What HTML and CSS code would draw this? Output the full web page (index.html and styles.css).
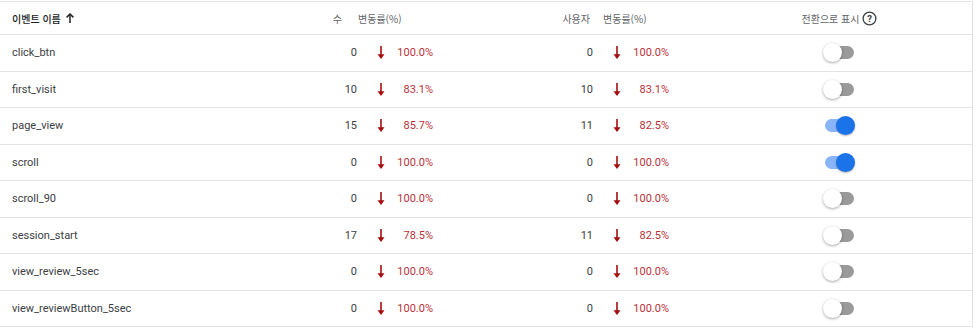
FILE: index.html
```html
<!DOCTYPE html>
<html lang="ko">
<head>
<meta charset="utf-8">
<link rel="stylesheet" href="styles.css">
</head>
<body>
<div class="table">
  <div class="row head">
    <div class="c-name h-name">이벤트 이름
      <svg class="up" width="8" height="10" viewBox="0 0 8 10"><path d="M4 10V2" stroke="#202124" stroke-width="1.5"/><path d="M0.6 4.4L4 1 7.4 4.4" fill="none" stroke="#202124" stroke-width="1.5"/></svg>
    </div>
    <div class="c-num h-count">수</div>
    <div class="h-chg1">변동률(%)</div>
    <div class="c-users h-users">사용자</div>
    <div class="h-chg2">변동률(%)</div>
    <div class="c-spacer"></div>
    <div class="c-tog h-tog">전환으로 표시
      <svg class="help" width="15" height="15" viewBox="0 0 15 15"><circle cx="7.5" cy="7.5" r="6.4" fill="none" stroke="#3c4043" stroke-width="1.3"/><text x="7.5" y="10.8" text-anchor="middle" font-family="Roboto, sans-serif" font-size="9.5" font-weight="700" fill="#3c4043">?</text></svg>
    </div>
  </div>

  <div class="row"><div class="c-name">click_btn</div><div class="c-num">0</div><div class="c-arr"><svg class="down" width="8" height="13" viewBox="0 0 8 13"><path d="M4 0V10" stroke="#a50e0e" stroke-width="1.6"/><path d="M0.5 8.2L4 13 7.5 8.2z" fill="#a50e0e"/></svg></div><div class="c-pct">100.0%</div><div class="c-users">0</div><div class="c-arr"><svg class="down" width="8" height="13" viewBox="0 0 8 13"><path d="M4 0V10" stroke="#a50e0e" stroke-width="1.6"/><path d="M0.5 8.2L4 13 7.5 8.2z" fill="#a50e0e"/></svg></div><div class="c-pct">100.0%</div><div class="c-spacer"></div><div class="c-tog"><span class="toggle"><span class="track"></span><span class="knob"></span></span></div></div>

  <div class="row"><div class="c-name">first_visit</div><div class="c-num">10</div><div class="c-arr"><svg class="down" width="8" height="13" viewBox="0 0 8 13"><path d="M4 0V10" stroke="#a50e0e" stroke-width="1.6"/><path d="M0.5 8.2L4 13 7.5 8.2z" fill="#a50e0e"/></svg></div><div class="c-pct">83.1%</div><div class="c-users">10</div><div class="c-arr"><svg class="down" width="8" height="13" viewBox="0 0 8 13"><path d="M4 0V10" stroke="#a50e0e" stroke-width="1.6"/><path d="M0.5 8.2L4 13 7.5 8.2z" fill="#a50e0e"/></svg></div><div class="c-pct">83.1%</div><div class="c-spacer"></div><div class="c-tog"><span class="toggle"><span class="track"></span><span class="knob"></span></span></div></div>

  <div class="row"><div class="c-name">page_view</div><div class="c-num">15</div><div class="c-arr"><svg class="down" width="8" height="13" viewBox="0 0 8 13"><path d="M4 0V10" stroke="#a50e0e" stroke-width="1.6"/><path d="M0.5 8.2L4 13 7.5 8.2z" fill="#a50e0e"/></svg></div><div class="c-pct">85.7%</div><div class="c-users">11</div><div class="c-arr"><svg class="down" width="8" height="13" viewBox="0 0 8 13"><path d="M4 0V10" stroke="#a50e0e" stroke-width="1.6"/><path d="M0.5 8.2L4 13 7.5 8.2z" fill="#a50e0e"/></svg></div><div class="c-pct">82.5%</div><div class="c-spacer"></div><div class="c-tog"><span class="toggle on"><span class="track"></span><span class="knob"></span></span></div></div>

  <div class="row"><div class="c-name">scroll</div><div class="c-num">0</div><div class="c-arr"><svg class="down" width="8" height="13" viewBox="0 0 8 13"><path d="M4 0V10" stroke="#a50e0e" stroke-width="1.6"/><path d="M0.5 8.2L4 13 7.5 8.2z" fill="#a50e0e"/></svg></div><div class="c-pct">100.0%</div><div class="c-users">0</div><div class="c-arr"><svg class="down" width="8" height="13" viewBox="0 0 8 13"><path d="M4 0V10" stroke="#a50e0e" stroke-width="1.6"/><path d="M0.5 8.2L4 13 7.5 8.2z" fill="#a50e0e"/></svg></div><div class="c-pct">100.0%</div><div class="c-spacer"></div><div class="c-tog"><span class="toggle on"><span class="track"></span><span class="knob"></span></span></div></div>

  <div class="row"><div class="c-name">scroll_90</div><div class="c-num">0</div><div class="c-arr"><svg class="down" width="8" height="13" viewBox="0 0 8 13"><path d="M4 0V10" stroke="#a50e0e" stroke-width="1.6"/><path d="M0.5 8.2L4 13 7.5 8.2z" fill="#a50e0e"/></svg></div><div class="c-pct">100.0%</div><div class="c-users">0</div><div class="c-arr"><svg class="down" width="8" height="13" viewBox="0 0 8 13"><path d="M4 0V10" stroke="#a50e0e" stroke-width="1.6"/><path d="M0.5 8.2L4 13 7.5 8.2z" fill="#a50e0e"/></svg></div><div class="c-pct">100.0%</div><div class="c-spacer"></div><div class="c-tog"><span class="toggle"><span class="track"></span><span class="knob"></span></span></div></div>

  <div class="row"><div class="c-name">session_start</div><div class="c-num">17</div><div class="c-arr"><svg class="down" width="8" height="13" viewBox="0 0 8 13"><path d="M4 0V10" stroke="#a50e0e" stroke-width="1.6"/><path d="M0.5 8.2L4 13 7.5 8.2z" fill="#a50e0e"/></svg></div><div class="c-pct">78.5%</div><div class="c-users">11</div><div class="c-arr"><svg class="down" width="8" height="13" viewBox="0 0 8 13"><path d="M4 0V10" stroke="#a50e0e" stroke-width="1.6"/><path d="M0.5 8.2L4 13 7.5 8.2z" fill="#a50e0e"/></svg></div><div class="c-pct">82.5%</div><div class="c-spacer"></div><div class="c-tog"><span class="toggle"><span class="track"></span><span class="knob"></span></span></div></div>

  <div class="row"><div class="c-name">view_review_5sec</div><div class="c-num">0</div><div class="c-arr"><svg class="down" width="8" height="13" viewBox="0 0 8 13"><path d="M4 0V10" stroke="#a50e0e" stroke-width="1.6"/><path d="M0.5 8.2L4 13 7.5 8.2z" fill="#a50e0e"/></svg></div><div class="c-pct">100.0%</div><div class="c-users">0</div><div class="c-arr"><svg class="down" width="8" height="13" viewBox="0 0 8 13"><path d="M4 0V10" stroke="#a50e0e" stroke-width="1.6"/><path d="M0.5 8.2L4 13 7.5 8.2z" fill="#a50e0e"/></svg></div><div class="c-pct">100.0%</div><div class="c-spacer"></div><div class="c-tog"><span class="toggle"><span class="track"></span><span class="knob"></span></span></div></div>

  <div class="row"><div class="c-name">view_reviewButton_5sec</div><div class="c-num">0</div><div class="c-arr"><svg class="down" width="8" height="13" viewBox="0 0 8 13"><path d="M4 0V10" stroke="#a50e0e" stroke-width="1.6"/><path d="M0.5 8.2L4 13 7.5 8.2z" fill="#a50e0e"/></svg></div><div class="c-pct">100.0%</div><div class="c-users">0</div><div class="c-arr"><svg class="down" width="8" height="13" viewBox="0 0 8 13"><path d="M4 0V10" stroke="#a50e0e" stroke-width="1.6"/><path d="M0.5 8.2L4 13 7.5 8.2z" fill="#a50e0e"/></svg></div><div class="c-pct">100.0%</div><div class="c-spacer"></div><div class="c-tog"><span class="toggle"><span class="track"></span><span class="knob"></span></span></div></div>
</div>
</body>
</html>
```

FILE: styles.css
```css
html, body {
  margin: 0;
  padding: 0;
  background: #ffffff;
}

body {
  font-family: Roboto, "Noto Sans CJK KR", sans-serif;
  font-size: 11px;
  color: #3c4043;
}

.table {
  width: 972px;
  margin-top: 1px;
  border-top: 1px solid #e6e6e6;
  border-right: 1px solid #e3e3e3;
}

.row {
  display: grid;
  grid-template-columns: 300px 57px 36px 40px 160px 36px 40px 130px 80px 1fr;
  align-items: center;
  height: 35.5px;
  border-bottom: 1px solid #e3e3e3;
  white-space: nowrap;
}

.row.head {
  height: 32px;
  font-family: "Noto Sans CJK KR", Roboto, sans-serif;
  font-size: 10px;
  color: #5f6368;
}

.c-name {
  padding-left: 12px;
}

.c-num,
.c-users,
.c-pct {
  text-align: right;
}

.c-pct {
  color: #b8323a;
}

.c-arr {
  display: flex;
  align-items: center;
  padding-left: 20px;
}

.c-tog {
  display: flex;
  justify-content: center;
  align-items: center;
}

.h-name {
  display: flex;
  align-items: center;
  gap: 5px;
  color: #202124;
  font-weight: 500;
}

.up {
  display: block;
}

.h-count {
  padding-right: 15px;
}

.h-chg1 {
  grid-column: 3 / span 2;
  padding-left: 1px;
}

.h-users {
  padding-right: 3px;
}

.h-chg2 {
  grid-column: 6 / span 2;
  padding-left: 10px;
}

.h-tog {
  grid-column: 9;
  gap: 2px;
  color: #5f6368;
}

.help {
  display: block;
  flex: none;
}

.down {
  display: block;
}

.toggle {
  position: relative;
  display: block;
  width: 32px;
  height: 19px;
}

.track {
  position: absolute;
  left: 2px;
  right: 1px;
  top: 3px;
  height: 13px;
  border-radius: 7px;
  background: #9a9a9a;
}

.knob {
  position: absolute;
  left: 0;
  top: 0;
  width: 19px;
  height: 19px;
  border-radius: 50%;
  background: #ffffff;
  box-shadow: 0 1px 3px rgba(0, 0, 0, 0.35);
}

.toggle.on .track {
  background: #8ab4f8;
}

.toggle.on .knob {
  left: auto;
  right: 0;
  background: #1a73e8;
  box-shadow: 0 1px 2px rgba(0, 0, 0, 0.3);
}
```
